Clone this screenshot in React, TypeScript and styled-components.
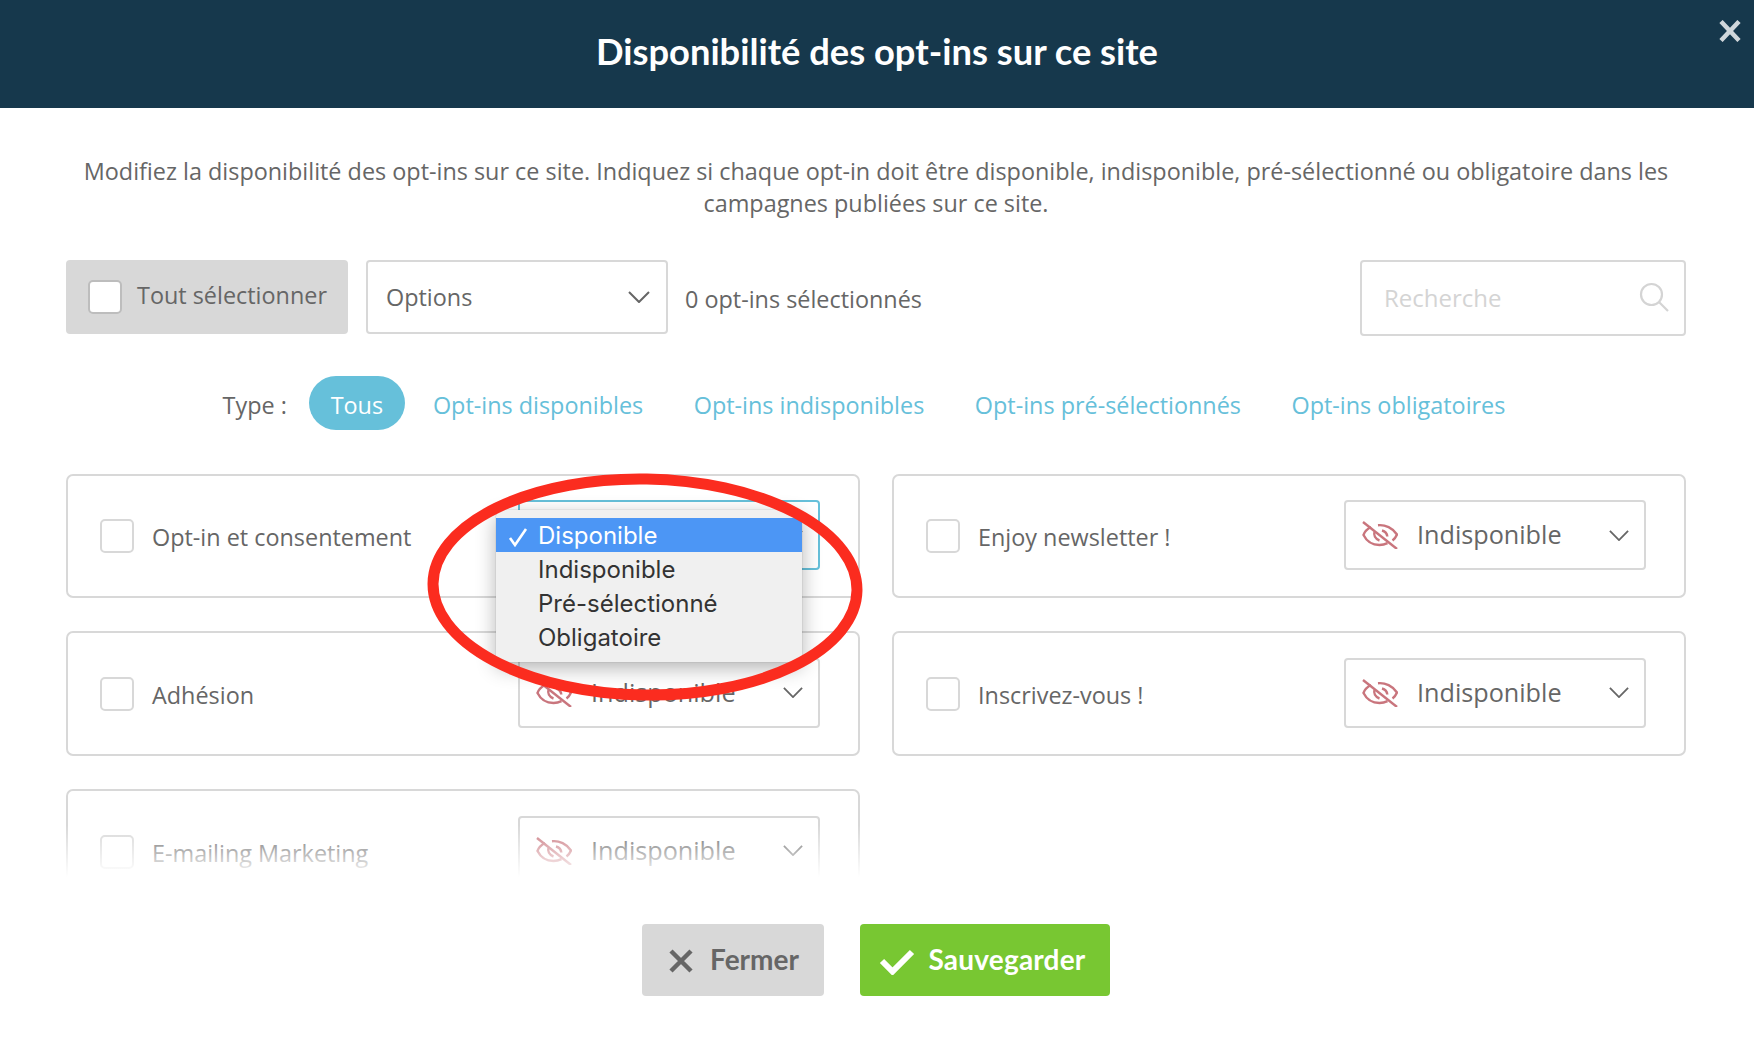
import React from "react";
import styled, { createGlobalStyle } from "styled-components";

const Global = createGlobalStyle`
  html, body { margin: 0; padding: 0; background: #fff; }
  * { box-sizing: border-box; }
  body { font-family: "Open Sans", sans-serif; color: #666; overflow: hidden; }
`;

const Modal = styled.div`
  position: relative;
  width: 1754px;
  height: 1054px;
  background: #fff;
  display: flex;
  flex-direction: column;
`;
const Header = styled.header`
  position: relative;
  height: 108px;
  background: #16384c;
  display: flex;
  align-items: center;
  justify-content: center;
`;
const Title = styled.h1`
  margin: 0 0 6px;
  font-family: Lato, sans-serif;
  font-size: 36.300px;
  font-weight: 700;
  color: #fff;
`;
const CloseX = styled.svg`
  position: absolute;
  right: 13px;
  top: 20px;
  width: 22px;
  height: 22px;
`;
const Desc = styled.p`
  margin: 47px auto 0;
  width: 1640px;
  font-size: 23.400px;
  line-height: 32px;
  text-align: center;
  color: #666;
  padding-right: 2px;
`;
const Toolbar = styled.div`
  margin: 41px 68px 0 66px;
  height: 75px;
  display: flex;
  align-items: flex-start;
`;
const SelectAll = styled.div`
  width: 282px;
  height: 74px;
  background: #d8d8d8;
  border-radius: 4px;
  display: flex;
  align-items: center;
  padding-left: 22px;
  gap: 15px;
  font-size: 23.400px;
  line-height: 30px;
`;
const SelectAllText = styled.span`
  margin-top: -4px;
`;
const Check = styled.span<{ $white?: boolean }>`
  display: block;
  width: 34px;
  height: 34px;
  flex: none;
  background: #fff;
  border: 2px solid ${(p) => (p.$white ? "#bdbdbd" : "#d8d8d8")};
  border-radius: 5px;
`;
const OptionsBox = styled.div`
  margin-left: 18px;
  width: 302px;
  height: 74px;
  border: 2px solid #d8d8d8;
  border-radius: 4px;
  display: flex;
  align-items: center;
  justify-content: space-between;
  padding: 0 16px 0 18px;
  font-size: 23.400px;
`;
const Count = styled.div`
  margin-left: 17px;
  height: 78px;
  display: flex;
  align-items: center;
  font-size: 23.400px;
  flex: 1;
`;
const Search = styled.div`
  width: 326px;
  height: 76px;
  border: 2px solid #d8d8d8;
  border-radius: 4px;
  display: flex;
  align-items: center;
  justify-content: space-between;
  padding: 0 15px 2px 22px;
  font-size: 24px;
  color: #d4d4d4;
`;
const TypeRow = styled.nav`
  margin-top: 41px;
  height: 54px;
  display: flex;
  align-items: center;
  justify-content: center;
  font-size: 23.400px;
  line-height: 30px;
  padding-right: 26px;
`;
const TypeLabel = styled.span`
  margin-right: 22px;
  padding-top: 4px;
`;
const Pill = styled.span`
  width: 96px;
  height: 54px;
  border-radius: 27px;
  background: #66c0da;
  color: #fff;
  display: flex;
  align-items: center;
  justify-content: center;
  padding-top: 4px;
  margin-right: 28px;
`;
const TypeLink = styled.a`
  color: #66c0da;
  margin-right: 50.500px;
  padding-top: 4px;
  &:last-child { margin-right: 0; }
`;
const ListWrap = styled.div`
  position: relative;
  margin: 44px 68px 0 66px;
  height: 403px;
  overflow: hidden;
  &::after {
    content: "";
    position: absolute;
    left: 0;
    right: 0;
    bottom: 0;
    height: 52px;
    background: linear-gradient(rgba(255, 255, 255, 0), #fff);
  }
`;
const Grid = styled.div`
  display: grid;
  grid-template-columns: 794px 794px;
  grid-template-rows: 124px 125px 125px;
  column-gap: 32px;
  row-gap: 33px;
`;
const Card = styled.div`
  border: 2px solid #d8d8d8;
  border-radius: 7px;
  display: flex;
  align-items: center;
  padding: 0 38px 0 32px;
`;
const Label = styled.span`
  margin-left: 18px;
  font-size: 23.400px;
  flex: 1;
  padding-top: 2px;
`;
const Select = styled.div<{ $focus?: boolean }>`
  width: 302px;
  height: 70px;
  border: 2px solid ${(p) => (p.$focus ? "#66c0da" : "#d8d8d8")};
  border-radius: 4px;
  display: flex;
  align-items: center;
  justify-content: flex-end;
  padding: 0 15px 0 16px;
  font-size: 25.200px;
  margin-top: -2px;
`;
const SelectText = styled.span`
  margin-left: 19px;
  flex: 1;
  margin-top: -2px;
`;
const Footer = styled.footer`
  margin-top: 47px;
  display: flex;
  justify-content: center;
  gap: 36px;
  padding-right: 2px;
`;
const Button = styled.button<{ $primary?: boolean }>`
  height: 72px;
  width: ${(p) => (p.$primary ? "250px" : "182px")};
  border: 0;
  border-radius: 4px;
  background: ${(p) => (p.$primary ? "#78c732" : "#d8d8d8")};
  color: ${(p) => (p.$primary ? "#fff" : "#666")};
  font-family: Lato, sans-serif;
  font-weight: 700;
  font-size: 28px;
  line-height: 34px;
  letter-spacing: ${(p) => (p.$primary ? "0.2px" : "0")};
  display: flex;
  align-items: center;
  justify-content: center;
  gap: ${(p) => (p.$primary ? "13px" : "17px")};
  padding: ${(p) => (p.$primary ? "0 5px 2px 0" : "0 0 2px 2px")};
`;
const ButtonIcon = styled.svg`
  margin-top: 4px;
`;
const Dropdown = styled.ul`
  position: absolute;
  left: 496px;
  top: 510px;
  width: 306px;
  height: 152px;
  margin: 0;
  padding: 8px 0 0;
  list-style: none;
  background: #f0f0f0;
  border-radius: 6px;
  box-shadow: 0 0 1px rgba(0, 0, 0, 0.45), 0 6px 20px rgba(0, 0, 0, 0.3);
  font-family: Inter, sans-serif;
  font-size: 24px;
  color: #333;
`;
const Item = styled.li<{ $active?: boolean }>`
  height: 34px;
  line-height: 36px;
  padding-left: 42px;
  position: relative;
  background: ${(p) => (p.$active ? "#4c96f5" : "transparent")};
  color: ${(p) => (p.$active ? "#fff" : "#333")};
`;
const Tick = styled.svg`
  position: absolute;
  left: 12px;
  top: 9px;
  width: 20px;
  height: 20px;
`;
const Annotation = styled.svg`
  position: absolute;
  left: 420px;
  top: 465px;
  width: 450px;
  height: 245px;
  pointer-events: none;
`;

const Chevron = ({ w = 22 }: { w?: number }) => (
  <svg width={w} height={w * 0.55} viewBox="0 0 22 12" fill="none" stroke="#666" strokeWidth="2">
    <path d="M1 1l10 10L21 1" />
  </svg>
);
const EyeSlash = () => (
  <svg width="36" height="28" viewBox="0 0 36 28" fill="none" stroke="#c9757d" strokeWidth="2.400">
    <path d="M1 1l34 27" />
    <path d="M9 6C5 8 2.500 11 1.500 14c3 6 9 10 16 10 3 0 5.500-.6 8-1.800" />
    <path d="M16 4.200c7-.8 15 3 19 9.300-1 2.500-2.600 4.500-4.500 6" />
    <path d="M12.500 11c-1 3 .5 7 5 8.500M20 9.500c3 .8 5 3 5.300 6" />
  </svg>
);

const rows: [string, boolean][] = [
  ["Opt-in et consentement", true],
  ["Enjoy newsletter !", false],
  ["Adhésion", false],
  ["Inscrivez-vous !", false],
  ["E-mailing Marketing", false],
];

export default function App() {
  return (
    <Modal>
      <Global />
      <Header>
        <Title>Disponibilité des opt-ins sur ce site</Title>
        <CloseX viewBox="0 0 22 22" fill="none" stroke="#d0d7db" strokeWidth="4.500">
          <path d="M2 1.500l18 19M20 1.500l-18 19" />
        </CloseX>
      </Header>
      <Desc>
        Modifiez la disponibilité des opt-ins sur ce site. Indiquez si chaque opt-in doit être disponible, indisponible, pré-sélectionné ou obligatoire dans les campagnes publiées sur ce site.
      </Desc>
      <Toolbar>
        <SelectAll>
          <Check $white />
          <SelectAllText>Tout sélectionner</SelectAllText>
        </SelectAll>
        <OptionsBox>
          Options
          <Chevron />
        </OptionsBox>
        <Count>0 opt-ins sélectionnés</Count>
        <Search>
          Recherche
          <svg width="30" height="30" viewBox="0 0 30 30" fill="none" stroke="#d4d4d4" strokeWidth="2.200">
            <circle cx="12.500" cy="12.500" r="10.500" />
            <path d="M20 20l9 9" />
          </svg>
        </Search>
      </Toolbar>
      <TypeRow>
        <TypeLabel>Type :</TypeLabel>
        <Pill>Tous</Pill>
        <TypeLink>Opt-ins disponibles</TypeLink>
        <TypeLink>Opt-ins indisponibles</TypeLink>
        <TypeLink>Opt-ins pré-sélectionnés</TypeLink>
        <TypeLink>Opt-ins obligatoires</TypeLink>
      </TypeRow>
      <ListWrap>
        <Grid>
          {rows.map(([label, focus]) => (
            <Card key={label}>
              <Check />
              <Label>{label}</Label>
              <Select $focus={focus}>
                {!focus && <EyeSlash />}
                {!focus && <SelectText>Indisponible</SelectText>}
                <Chevron w={20} />
              </Select>
            </Card>
          ))}
        </Grid>
      </ListWrap>
      <Footer>
        <Button>
          <ButtonIcon width="24" height="24" viewBox="0 0 24 24" fill="none" stroke="#666" strokeWidth="4.500">
            <path d="M2 2l20 20M22 2L2 22" />
          </ButtonIcon>
          Fermer
        </Button>
        <Button $primary>
          <ButtonIcon width="36" height="27" viewBox="0 0 36 27" fill="none" stroke="#fff" strokeWidth="6">
            <path d="M3 13l10.500 10.500L33 4" />
          </ButtonIcon>
          Sauvegarder
        </Button>
      </Footer>
      <Dropdown>
        <Item $active>
          <Tick viewBox="0 0 20 20" fill="none" stroke="#fff" strokeWidth="2.600">
            <path d="M2 11l5 7L18 2" />
          </Tick>
          Disponible
        </Item>
        <Item>Indisponible</Item>
        <Item>Pré-sélectionné</Item>
        <Item>Obligatoire</Item>
      </Dropdown>
      <Annotation viewBox="0 0 450 245" fill="none">
        <ellipse cx="225" cy="122" rx="212" ry="108" stroke="#fb2c1f" strokeWidth="11" transform="rotate(1 225 122)" />
      </Annotation>
    </Modal>
  );
}
